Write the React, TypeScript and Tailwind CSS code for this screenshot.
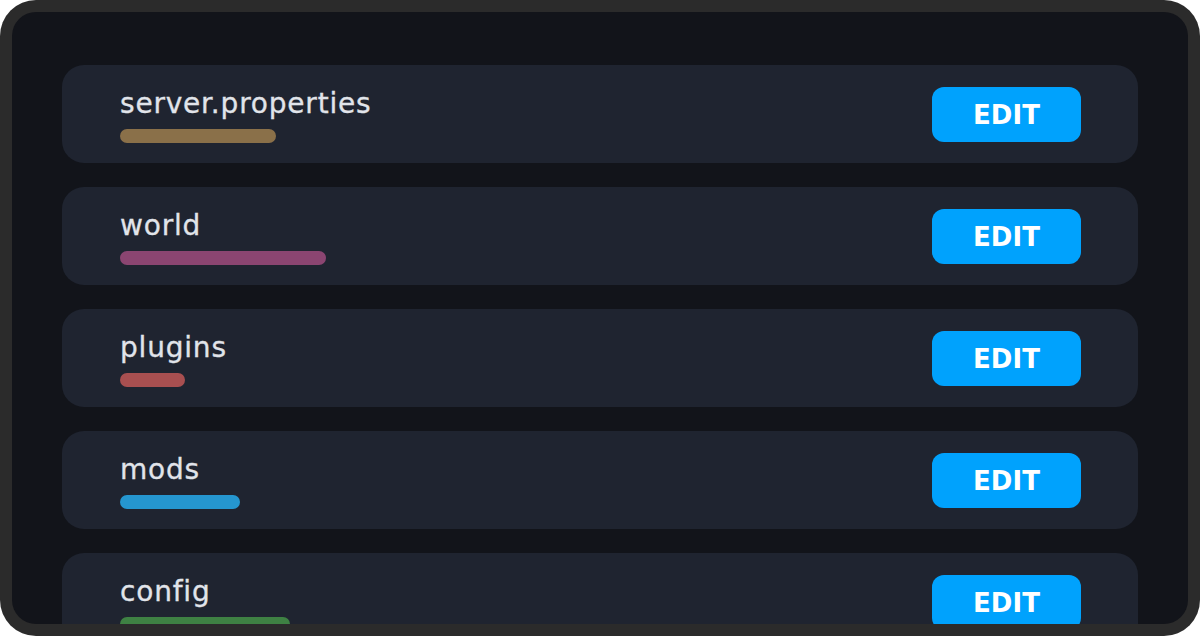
import React from "react";

type Entry = {
  name: string;
  bar: string;
  width: number;
};

const ENTRIES: Entry[] = [
  { name: "server.properties", bar: "bg-[#8a7049]", width: 156 },
  { name: "world", bar: "bg-[#8b4571]", width: 206 },
  { name: "plugins", bar: "bg-[#a84f50]", width: 65 },
  { name: "mods", bar: "bg-[#2596cf]", width: 120 },
  { name: "config", bar: "bg-[#3e8143]", width: 170 },
];

function FileRow({ entry }: { entry: Entry }) {
  return (
    <div className="flex h-[98px] shrink-0 items-center justify-between rounded-[22px] bg-[#1f2430] pl-[58px] pr-[57px]">
      <div className="flex flex-col pt-[2px]">
        <span className="text-[28px] font-medium leading-[32px] tracking-[0.8px] text-[#e1e4ea] [-webkit-text-stroke:0.3px_#e1e4ea]">
          {entry.name}
        </span>
        <span
          className={`mt-[9px] h-[14px] rounded-full ${entry.bar}`}
          style={{ width: entry.width }}
        />
      </div>
      <button
        type="button"
        className="flex h-[55px] w-[149px] items-center justify-center rounded-[12px] bg-[#00a2fd] pt-[3px] text-[26px] font-bold text-white"
      >
        EDIT
      </button>
    </div>
  );
}

export default function App() {
  return (
    <div className="h-[636px] w-[1200px] bg-white font-['DejaVu_Sans',sans-serif]">
      <div className="h-full rounded-[36px] bg-[#2b2b2b] p-[12px]">
        <div className="flex h-full flex-col gap-6 overflow-hidden rounded-[24px] bg-[#12141a] px-[50px] pt-[53px]">
          {ENTRIES.map((entry) => (
            <FileRow key={entry.name} entry={entry} />
          ))}
        </div>
      </div>
    </div>
  );
}
